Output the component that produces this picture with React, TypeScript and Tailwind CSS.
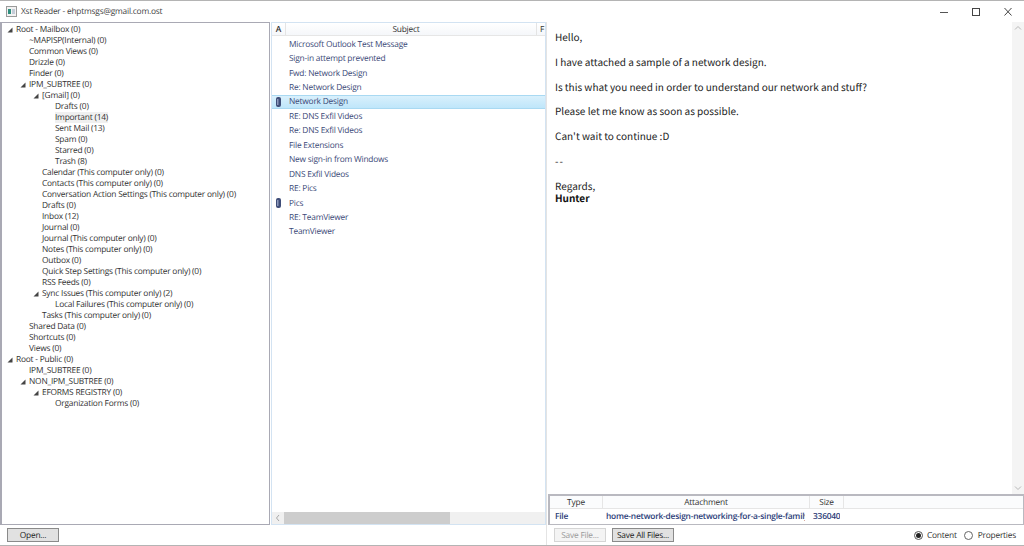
const tree: [number, string, boolean?][] = [
  [0, 'Root - Mailbox (0)', true],
  [1, '~MAPISP(Internal) (0)'],
  [1, 'Common Views (0)'],
  [1, 'Drizzle (0)'],
  [1, 'Finder (0)'],
  [1, 'IPM_SUBTREE (0)', true],
  [2, '[Gmail] (0)', true],
  [3, 'Drafts (0)'],
  [3, 'Important (14)'],
  [3, 'Sent Mail (13)'],
  [3, 'Spam (0)'],
  [3, 'Starred (0)'],
  [3, 'Trash (8)'],
  [2, 'Calendar (This computer only) (0)'],
  [2, 'Contacts (This computer only) (0)'],
  [2, 'Conversation Action Settings (This computer only) (0)'],
  [2, 'Drafts (0)'],
  [2, 'Inbox (12)'],
  [2, 'Journal (0)'],
  [2, 'Journal (This computer only) (0)'],
  [2, 'Notes (This computer only) (0)'],
  [2, 'Outbox (0)'],
  [2, 'Quick Step Settings (This computer only) (0)'],
  [2, 'RSS Feeds (0)'],
  [2, 'Sync Issues (This computer only) (2)', true],
  [3, 'Local Failures (This computer only) (0)'],
  [2, 'Tasks (This computer only) (0)'],
  [1, 'Shared Data (0)'],
  [1, 'Shortcuts (0)'],
  [1, 'Views (0)'],
  [0, 'Root - Public (0)', true],
  [1, 'IPM_SUBTREE (0)'],
  [1, 'NON_IPM_SUBTREE (0)', true],
  [2, 'EFORMS REGISTRY (0)', true],
  [3, 'Organization Forms (0)'],
];

const messages: [string, boolean?, boolean?][] = [
  ['Microsoft Outlook Test Message'],
  ['Sign-in attempt prevented'],
  ['Fwd: Network Design'],
  ['Re: Network Design'],
  ['Network Design', true, true],
  ['RE: DNS Exfil Videos'],
  ['Re: DNS Exfil Videos'],
  ['File Extensions'],
  ['New sign-in from Windows'],
  ['DNS Exfil Videos'],
  ['RE: Pics'],
  ['Pics', true],
  ['RE: TeamViewer'],
  ['TeamViewer'],
];

const indents = ['pl-[14px]', 'pl-[27px]', 'pl-[40px]', 'pl-[53px]'];

function Clip() {
  return (
    <svg width="5" height="10" viewBox="0 0 5 10" className="ml-[4px]">
      <rect x="0" y="0" width="5" height="10" rx="2" fill="#3f4d78" />
      <rect x="1" y="2" width="1.5" height="6" fill="#8d9abc" />
    </svg>
  );
}

function Btn({ label, off, w }: { label: string; off?: boolean; w: string }) {
  return (
    <div
      className={`h-[14px] ${w} flex items-center justify-center whitespace-nowrap border ${
        off ? 'border-[#d5d5d5] bg-[#f4f4f4] text-[#9a9a9a]' : 'border-[#8a8a8a] bg-[#e1e1e1] text-[#222]'
      }`}
    >
      {label}
    </div>
  );
}

export default function App() {
  return (
    <div className="w-[1024px] h-[546px] overflow-hidden bg-white flex flex-col border-t border-b border-[#b4b4b4] font-['Open_Sans',sans-serif] text-[8.4px] leading-[11px] tracking-[-0.22px] text-[#333] [text-rendering:geometricPrecision]">
      {/* title bar */}
      <div className="h-[21px] shrink-0 flex items-center">
        <svg width="11" height="11" viewBox="0 0 11 11" className="ml-[6px]">
          <rect x="0.5" y="0.5" width="10" height="10" fill="#f2f2f2" stroke="#9a9a9a" />
          <rect x="2" y="3" width="3" height="5" fill="#2f8f7f" />
          <rect x="6" y="3" width="3" height="5" fill="#c4ccd8" />
        </svg>
        <span className="ml-[4px] text-[#444]">Xst Reader - ehptmsgs@gmail.com.ost</span>
        <div className="ml-auto flex items-center text-[#444]">
          <svg width="32" height="12" viewBox="0 0 32 12"><line x1="12" y1="6.5" x2="20" y2="6.5" stroke="#555" /></svg>
          <svg width="32" height="12" viewBox="0 0 32 12"><rect x="12.5" y="2.5" width="7" height="7" fill="none" stroke="#444" /></svg>
          <svg width="32" height="12" viewBox="0 0 32 12"><path d="M12.5 2l7 7.5M19.5 2l-7 7.5" fill="none" stroke="#444" /></svg>
        </div>
      </div>

      <div className="flex-1 min-h-0 flex">
        {/* folder tree */}
        <div className="w-[270px] shrink-0 flex flex-col">
          <div className="h-[503px] border border-[#a9a9b4] border-l-2 pt-[1px] overflow-hidden">
            {tree.map(([depth, label, open], i) => (
              <div key={i} className={`relative h-[11px] whitespace-nowrap ${indents[depth]}`}>
                {open && (
                  <svg width="6" height="6" viewBox="0 0 6 6" className="absolute top-[3px]" style={{ left: 5 + depth * 13 }}>
                    <path d="M5.5 0.5V5.5H0.5Z" fill="#444" />
                  </svg>
                )}
                <span className={label === 'Important (14)' ? 'bg-[#f0f0f0]' : ''}>{label}</span>
              </div>
            ))}
          </div>
          <div className="flex-1 pl-[7px] pt-[3px]">
            <Btn label="Open..." w="w-[52px]" />
          </div>
        </div>

        {/* message list */}
        <div className="w-[277px] shrink-0 flex flex-col border-r border-[#e4e4e4]">
          <div className="h-[503px] ml-[1px] border border-[#d3e3f2] flex flex-col overflow-hidden">
            <div className="h-[13px] shrink-0 flex items-center border-b border-[#e6e6e6] bg-gradient-to-b from-white to-[#f5f7fa] text-center">
              <div className="w-[14px] h-full border-r border-[#e4e4e4] font-semibold pt-[1px]">A</div>
              <div className="flex-1 h-full border-r border-[#e4e4e4] pr-[10px] pt-[1px]">Subject</div>
              <div className="w-[8px] h-full text-left pl-[3px] pt-[1px]">F</div>
            </div>
            <div className="flex-1 pt-[1px]">
              {messages.map(([subject, clip, selected], i) => (
                <div
                  key={i}
                  className={`h-[14.45px] flex items-center text-[#3c4a78] ${
                    selected ? 'bg-gradient-to-b from-[#d9f0fc] to-[#bfe6fa] border-y border-[#a9d9f2] text-[#2a3a68]' : ''
                  }`}
                >
                  <div className="w-[17px]">{clip && <Clip />}</div>
                  {subject}
                </div>
              ))}
            </div>
            <div className="h-[12px] shrink-0 flex bg-[#f0f0f0] items-center">
              <svg width="12" height="12" viewBox="0 0 12 12"><path d="M7 3L4.5 6 7 9" fill="none" stroke="#a8a8a8" /></svg>
              <div className="w-[166px] h-full bg-[#cdcdcd]" />
            </div>
          </div>
          <div className="flex-1" />
        </div>

        {/* reading pane */}
        <div className="flex-1 min-w-0 flex flex-col">
          <div className="h-[472px] flex">
            <div className="flex-1 pl-[8px] pt-[9px] font-['Noto_Sans_CJK_JP',sans-serif] text-[10px] leading-[12.5px] tracking-normal text-[#222]">
              <p>Hello,</p>
              <p className="mt-[12.3px]">I have attached a sample of a network design.</p>
              <p className="mt-[12.3px]">Is this what you need in order to understand our network and stuff?</p>
              <p className="mt-[12.3px]">Please let me know as soon as possible.</p>
              <p className="mt-[12.3px]">Can't wait to continue :D</p>
              <p className="mt-[12.3px] tracking-[1px]">--</p>
              <p className="mt-[12.3px]">Regards,</p>
              <p className="font-bold text-[#111]">Hunter</p>
            </div>
            <div className="w-[12px] shrink-0 bg-[#f4f4f4] flex flex-col justify-between">
              <svg width="12" height="12" viewBox="0 0 12 12"><path d="M3 7.5L6 4.5 9 7.5" fill="none" stroke="#b8b8b8" /></svg>
              <svg width="12" height="12" viewBox="0 0 12 12"><path d="M3 4.5L6 7.5 9 4.5" fill="none" stroke="#b8b8b8" /></svg>
            </div>
          </div>
          <div className="h-[31px] ml-[1px] border-2 border-r-1 border-b-1 border-[#b9b9c0] flex flex-col">
            <div className="h-[13px] flex items-center text-center border-b border-[#e6e6e6] bg-[#fbfcfd]">
              <div className="w-[53px] border-r border-[#e6e6e6] h-full pt-[1px]">Type</div>
              <div className="w-[207px] border-r border-[#e6e6e6] h-full pt-[1px]">Attachment</div>
              <div className="w-[34px] border-r border-[#e6e6e6] h-full pt-[1px]">Size</div>
            </div>
            <div className="flex-1 flex items-center font-semibold text-[#2b3d78] whitespace-nowrap">
              <div className="w-[53px] pl-[5px]">File</div>
              <div className="w-[199px] ml-[3px] overflow-hidden">home-network-design-networking-for-a-single-family</div>
              <div className="w-[27px] ml-[8px] overflow-hidden">336040</div>
            </div>
          </div>
          <div className="flex-1 flex items-center pl-[7px] gap-[6px]">
            <Btn label="Save File..." off w="w-[52px]" />
            <Btn label="Save All Files..." w="w-[62px]" />
            <div className="ml-auto mr-[8px] flex items-center text-[#333]">
              <span className="w-[9px] h-[9px] rounded-full border border-[#555] flex items-center justify-center">
                <span className="w-[5px] h-[5px] rounded-full bg-[#222]" />
              </span>
              <span className="ml-[4px]">Content</span>
              <span className="ml-[7px] w-[9px] h-[9px] rounded-full border border-[#666]" />
              <span className="ml-[5px]">Properties</span>
            </div>
          </div>
        </div>
      </div>
    </div>
  );
}
